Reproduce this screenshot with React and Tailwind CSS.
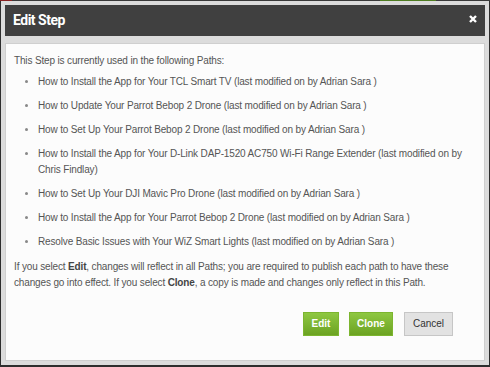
import { useState } from 'react'

const paths = [
  'How to Install the App for Your TCL Smart TV (last modified on by Adrian Sara )',
  'How to Update Your Parrot Bebop 2 Drone (last modified on by Adrian Sara )',
  'How to Set Up Your Parrot Bebop 2 Drone (last modified on by Adrian Sara )',
  'How to Install the App for Your D-Link DAP-1520 AC750 Wi-Fi Range Extender (last modified on by Chris Findlay)',
  'How to Set Up Your DJI Mavic Pro Drone (last modified on by Adrian Sara )',
  'How to Install the App for Your Parrot Bebop 2 Drone (last modified on by Adrian Sara )',
  'Resolve Basic Issues with Your WiZ Smart Lights (last modified on by Adrian Sara )',
]

export default function App() {
  const [open, setOpen] = useState(true)

  return (
    <div className="w-[490px] h-[367px] bg-[#2e2e2e] overflow-hidden font-['Liberation_Sans',Arial,sans-serif]">
      {/* page behind peeking out at the top */}
      <div className="flex h-[1px]">
        <div className="w-[12px] bg-[#8a2323]" />
        <div className="w-[368px] bg-[#3a3a3a]" />
        <div className="w-[56px] bg-[#4f7d22]" />
        <div className="flex-1 bg-[#3a3a3a]" />
      </div>

      {open && (
        <div className="ml-[1px] w-[488px] h-[364px] bg-[#dcdcdc] p-[4px] flex flex-col">
          <div className="h-[31px] bg-[#404040] flex items-center justify-between pl-[8px] pr-[8px]">
            <span className="text-white font-bold text-[14px] tracking-[-0.5px] font-['Roboto',sans-serif]">
              Edit Step
            </span>
            <button onClick={() => setOpen(false)} className="mt-[-3px]">
              <svg width="8" height="8" viewBox="0 0 8 8">
                <path d="M1 1L7 7M7 1L1 7" stroke="#fff" strokeWidth="2.4" strokeLinecap="butt" />
              </svg>
            </button>
          </div>

          <div className="mt-[7px] flex-1 bg-[#fcfcfc] border border-[#cfcfcf] px-[8px] pt-[9px] text-[10px] leading-[16px] tracking-[-0.15px] text-[#555]">
            <p>This Step is currently used in the following Paths:</p>
            <ul className="list-disc pl-[24px] mt-[5px] mb-[9px] marker:text-[#888]">
              {paths.map(p => (
                <li key={p} className="mb-[8px] pr-[8px]">{p}</li>
              ))}
            </ul>
            <p className="pr-[8px]">
              If you select <b className="text-[#444]">Edit</b>, changes will reflect in all Paths; you are required to publish each path to have these changes go into effect. If you select <b className="text-[#444]">Clone</b>, a copy is made and changes only reflect in this Path.
            </p>

            <div className="flex justify-end gap-[10px] mt-[21px] pr-[23px] tracking-normal">
              <button className="h-[24px] w-[36px] bg-gradient-to-b from-[#8ec741] to-[#6ca322] border border-[#7cb52f] text-white font-bold text-[10px]">
                Edit
              </button>
              <button className="h-[24px] w-[44px] bg-gradient-to-b from-[#8ec741] to-[#6ca322] border border-[#7cb52f] text-white font-bold text-[10px]">
                Clone
              </button>
              <button className="h-[24px] w-[49px] ml-[1px] bg-[#e2e2e2] border border-[#c6c6c6] text-[#333] text-[10px]">
                Cancel
              </button>
            </div>
          </div>
        </div>
      )}
    </div>
  )
}
